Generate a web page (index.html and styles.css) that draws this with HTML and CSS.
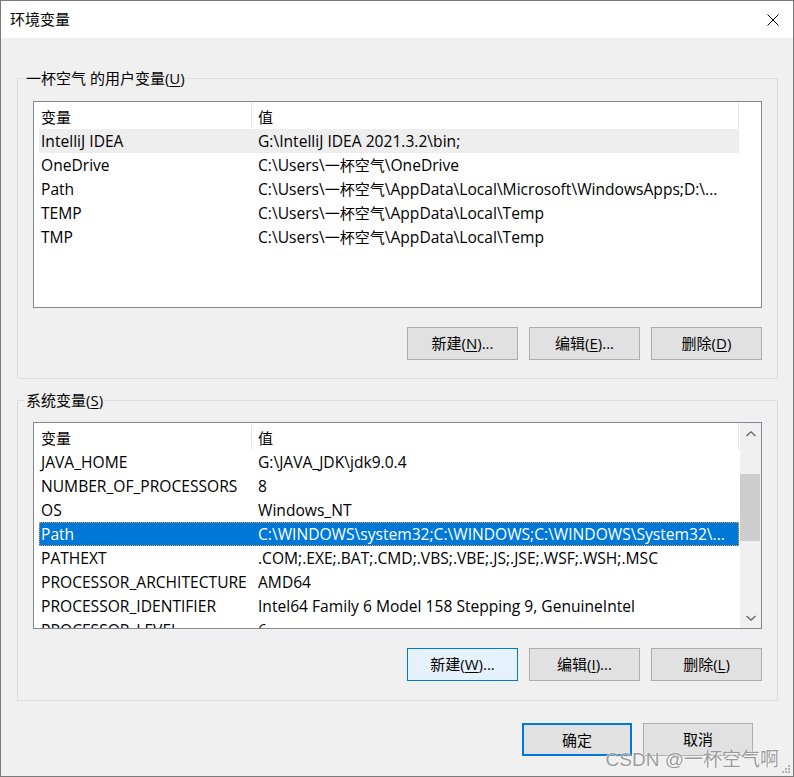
FILE: index.html
```html
<!DOCTYPE html>
<html lang="zh-CN">
<head>
<meta charset="utf-8">
<title>环境变量</title>
<link rel="stylesheet" href="styles.css">
</head>
<body>
<div class="window">
  <div class="titlebar">
    <span class="title">环境变量</span>
    <svg class="close" width="12" height="12" viewBox="0 0 12 12"><path d="M0.5 0.5 L11.5 11.5 M11.5 0.5 L0.5 11.5" stroke="#000" stroke-width="1" fill="none"/></svg>
  </div>
  <div class="content">
    <fieldset class="group">
      <legend class="group-label">一杯空气 的用户变量(<u>U</u>)</legend>
      <div class="list">
        <div class="list-main">
          <div class="list-header"><div class="hcol hcol-name">变量</div><div class="hcol hcol-value">值</div></div>
          <div class="rows">
            <div class="row row-hot"><span class="c-name">IntelliJ IDEA</span><span class="c-value">G:\IntelliJ IDEA 2021.3.2\bin;</span></div>
            <div class="row"><span class="c-name">OneDrive</span><span class="c-value">C:\Users\<span class="cjk">一杯空气</span>\OneDrive</span></div>
            <div class="row"><span class="c-name">Path</span><span class="c-value">C:\Users\<span class="cjk">一杯空气</span>\AppData\Local\Microsoft\WindowsApps;D:\...</span></div>
            <div class="row"><span class="c-name">TEMP</span><span class="c-value">C:\Users\<span class="cjk">一杯空气</span>\AppData\Local\Temp</span></div>
            <div class="row"><span class="c-name">TMP</span><span class="c-value">C:\Users\<span class="cjk">一杯空气</span>\AppData\Local\Temp</span></div>
          </div>
        </div>
      </div>
      <div class="btn-row">
        <button class="btn">新建(<u>N</u>)...</button>
        <button class="btn">编辑(<u>E</u>)...</button>
        <button class="btn">删除(<u>D</u>)</button>
      </div>
    </fieldset>

    <fieldset class="group group-system">
      <legend class="group-label">系统变量(<u>S</u>)</legend>
      <div class="list">
        <div class="list-main">
          <div class="list-header"><div class="hcol hcol-name">变量</div><div class="hcol hcol-value">值</div></div>
          <div class="rows">
            <div class="row"><span class="c-name">JAVA_HOME</span><span class="c-value">G:\JAVA_JDK\jdk9.0.4</span></div>
            <div class="row"><span class="c-name">NUMBER_OF_PROCESSORS</span><span class="c-value">8</span></div>
            <div class="row"><span class="c-name">OS</span><span class="c-value">Windows_NT</span></div>
            <div class="row row-selected"><span class="c-name">Path</span><span class="c-value">C:\WINDOWS\system32;C:\WINDOWS;C:\WINDOWS\System32\...</span></div>
            <div class="row"><span class="c-name">PATHEXT</span><span class="c-value">.COM;.EXE;.BAT;.CMD;.VBS;.VBE;.JS;.JSE;.WSF;.WSH;.MSC</span></div>
            <div class="row"><span class="c-name">PROCESSOR_ARCHITECTURE</span><span class="c-value">AMD64</span></div>
            <div class="row"><span class="c-name">PROCESSOR_IDENTIFIER</span><span class="c-value">Intel64 Family 6 Model 158 Stepping 9, GenuineIntel</span></div>
            <div class="row"><span class="c-name">PROCESSOR_LEVEL</span><span class="c-value">6</span></div>
          </div>
        </div>
        <div class="scrollbar">
          <div class="sb-btn"><svg width="10" height="6" viewBox="0 0 10 6"><path d="M0.5 5 L5 0.8 L9.5 5" stroke="#606060" stroke-width="1.2" fill="none"/></svg></div>
          <div class="sb-track"><div class="sb-thumb"></div></div>
          <div class="sb-btn"><svg width="10" height="6" viewBox="0 0 10 6"><path d="M0.5 1 L5 5.2 L9.5 1" stroke="#606060" stroke-width="1.2" fill="none"/></svg></div>
        </div>
      </div>
      <div class="btn-row">
        <button class="btn btn-hot">新建(<u>W</u>)...</button>
        <button class="btn">编辑(<u>I</u>)...</button>
        <button class="btn">删除(<u>L</u>)</button>
      </div>
    </fieldset>

    <div class="dialog-buttons">
      <button class="btn btn-dialog btn-default">确定</button>
      <button class="btn btn-dialog">取消</button>
    </div>
  </div>
  <div class="watermark">CSDN @一杯空气啊</div>
  <svg class="grip" width="10" height="10" viewBox="0 0 10 10" fill="#b4b4b4">
    <rect x="7" y="1" width="2" height="2"/>
    <rect x="4" y="4" width="2" height="2"/><rect x="7" y="4" width="2" height="2"/>
    <rect x="1" y="7" width="2" height="2"/><rect x="4" y="7" width="2" height="2"/><rect x="7" y="7" width="2" height="2"/>
  </svg>
</div>
</body>
</html>
```

FILE: styles.css
```css
* { box-sizing: border-box; }
html, body { margin: 0; padding: 0; background: #ffffff; }
body {
  font-family: "Open Sans", "Noto Sans CJK SC", sans-serif;
  font-size: 15px;
  color: #000;
}
.window {
  position: relative;
  width: 794px;
  height: 777px;
  border: 1px solid #7a7a7a;
  background: #f0f0f0;
  display: flex;
  flex-direction: column;
  overflow: hidden;
}
.titlebar {
  height: 37px;
  background: #fff;
  display: flex;
  align-items: center;
  justify-content: space-between;
  padding: 0 14px 0 9px;
}
.title { font-size: 15px; line-height: 37px; }
.close { display: block; }

.content {
  padding: 30px 15px 0 16px;
  display: flex;
  flex-direction: column;
}
.group {
  margin: 0;
  border: 1px solid #dcdcdc;
  padding: 13px 15px 18px 15px;
  min-width: 0;
}
.group-system { margin-top: 11px; padding-top: 12px; padding-bottom: 19px; }
.group-label {
  margin-left: -8px;
  padding: 0 1px;
  line-height: 20px;
  font-size: 15px;
}
u { text-decoration: underline; text-underline-offset: 2px; }

.list {
  height: 207px;
  border: 1px solid #828790;
  background: #fff;
  display: flex;
  overflow: hidden;
}
.list-main { flex: 1; min-width: 0; overflow: hidden; }
.list-header { display: flex; height: 27px; }
.hcol {
  padding: 4px 0 0 7px;
  line-height: 23px;
  border-right: 1px solid #e5e5e5;
}
.hcol-name { width: 218px; }
.hcol-value { width: 487px; padding-left: 6px; }
.rows { display: flex; flex-direction: column; }
.row {
  display: flex;
  width: 700px;
  margin-left: 5px;
  height: 24px;
  line-height: 24px;
  flex: none;
  white-space: nowrap;
  font-size: 15.6px;
}
.cjk { font-size: 15px; }
.c-name { width: 213px; padding-left: 2px; overflow: hidden; }
.c-value { flex: 1; padding-left: 6px; overflow: hidden; }
.row-hot { background: #eeeeee; }
.row-selected {
  background: #0078d7;
  color: #fff;
  outline: 1px dotted #f0a040;
  outline-offset: -1px;
}

.scrollbar {
  width: 21px;
  flex: none;
  background: #f0f0f0;
  display: flex;
  flex-direction: column;
}
.sb-btn {
  height: 21px;
  display: flex;
  align-items: center;
  justify-content: center;
}
.sb-track { flex: 1; padding: 0 1px 0 0; }
.sb-thumb { margin-top: 30px; height: 67px; background: #cdcdcd; }

.btn-row {
  display: flex;
  justify-content: flex-end;
  gap: 11px;
  margin-top: 19px;
}
.btn {
  width: 111px;
  height: 33px;
  margin: 0;
  padding: 0;
  border: 1px solid #adadad;
  background: #e1e1e1;
  font-family: inherit;
  font-size: 15px;
  color: #000;
  line-height: 31px;
}
.btn-hot { background: #e5f1fb; border-color: #0078d7; }

.dialog-buttons {
  display: flex;
  justify-content: flex-end;
  gap: 11px;
  margin-top: 22px;
  margin-right: 25px;
}
.btn-dialog { width: 110px; }
.btn-default { border: 2px solid #0078d7; }

.watermark {
  position: absolute;
  right: 14px;
  bottom: 4px;
  font-family: "Liberation Sans", "Noto Sans CJK SC", sans-serif;
  font-size: 19px;
  line-height: 24px;
  color: rgba(120,120,120,0.75);
  text-shadow: 0 0 2px #fff, 0 0 1px #fff;
}
.grip { position: absolute; right: 2px; bottom: 2px; }
```
